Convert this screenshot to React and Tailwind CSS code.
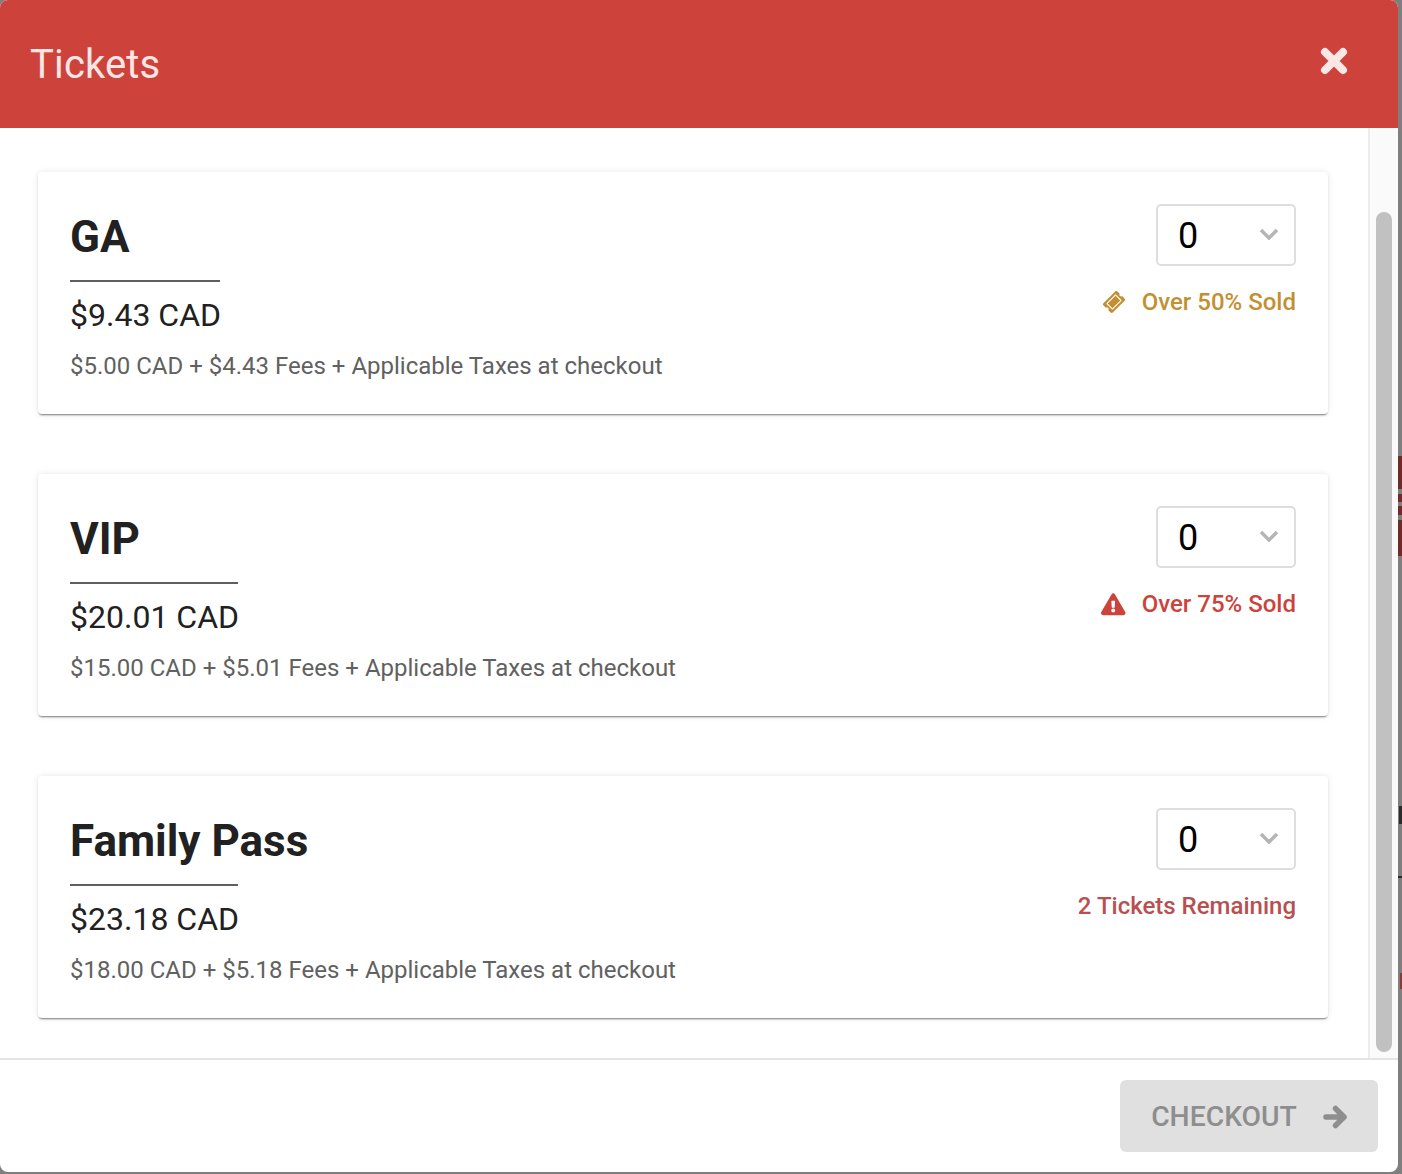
import React from "react";
import { FaTicketAlt, FaExclamationTriangle } from "react-icons/fa";

function Chevron() {
  return (
    <svg viewBox="0 0 20 12" className="w-[20px] h-[12px] mb-[2px]" fill="none" stroke="#b5b5b5" strokeWidth="3.5">
      <path d="M2 2l8 8 8-8" />
    </svg>
  );
}

function Card({ name, ruleW, price, detail, status, statusClass, icon }) {
  return (
    <div className="h-[242px] bg-white rounded-[4px] flex justify-between pl-[32px] pr-[32px] shadow-[0_2px_2px_-1px_rgba(0,0,0,0.5),0_0_6px_rgba(0,0,0,0.1)]">
      <div className="flex flex-col items-start">
        <div className="pt-[38px] h-[110px] border-b-2 border-[#5f5f5f] box-border" style={{ width: ruleW }}>
          <div className="text-[44px] leading-[54px] font-bold text-[#212121] whitespace-nowrap">{name}</div>
        </div>
        <div className="mt-[13px] text-[32px] leading-[40px] text-[#212121] whitespace-nowrap">{price}</div>
        <div className="mt-[15px] text-[24px] leading-[32px] text-[#616161] whitespace-nowrap">{detail}</div>
      </div>
      <div className="flex flex-col items-end pt-[32px]">
        <div className="w-[140px] h-[62px] border-2 border-[#dedede] rounded-[5px] flex items-center justify-between pl-[20px] pr-[15px] bg-white">
          <span className="text-[36px] leading-[40px] text-black pt-[2px]">0</span>
          <Chevron />
        </div>
        <div className={`mt-[20px] h-[32px] flex items-center text-[24px] font-medium ${statusClass}`}>
          {icon && <span className="mr-[15px] w-[26px] flex items-center justify-center">{icon}</span>}
          <span>{status}</span>
        </div>
      </div>
    </div>
  );
}

export default function App() {
  return (
    <div className="relative w-[1402px] h-[1174px] overflow-hidden bg-[#7f7f7f] font-['Roboto',sans-serif]">
      <div className="absolute right-0 top-[456px] w-[4px] h-[100px] bg-[#6e2b28]" />
      <div className="absolute right-0 top-[489px] w-[4px] h-[5px] bg-[#7f7f7f]" />
      <div className="absolute right-0 top-[502px] w-[4px] h-[4px] bg-[#7f7f7f]" />
      <div className="absolute right-0 top-[515px] w-[4px] h-[5px] bg-[#7f7f7f]" />
      <div className="absolute right-0 top-[806px] w-[3px] h-[18px] bg-[#2b2b2b]" />
      <div className="absolute right-0 top-[876px] w-[4px] h-[2px] bg-[#2b2b2b]" />
      <div className="absolute right-0 top-[973px] w-[2px] h-[16px] bg-[#8b3a38]" />

      <div className="relative w-[1398px] h-[1172px] bg-white rounded-[8px] overflow-hidden flex flex-col">
        <div className="h-[128px] shrink-0 bg-[#cd433c] flex items-center justify-between pl-[30px] pr-[50px]">
          <div className="text-[40px] leading-[48px] tracking-[0.15px] text-[#f9e6e5] pt-[2px]">Tickets</div>
          <svg viewBox="0 0 28 28" className="w-[28px] h-[28px] mb-[6px]" fill="none" stroke="#f9e6e5" strokeWidth="8" strokeLinecap="round" strokeLinejoin="round">
            <path d="M5 5l18 18M23 5L5 23" />
          </svg>
        </div>
        <div className="flex-1 flex min-h-0">
          <div className="flex-1 flex flex-col gap-[60px] pt-[44px] pl-[38px] pr-[40px]">
            <Card
              name="GA"
              ruleW={150}
              price="$9.43 CAD"
              detail="$5.00 CAD + $4.43 Fees + Applicable Taxes at checkout"
              status="Over 50% Sold"
              statusClass="text-[#c48f33]"
              icon={<FaTicketAlt size={20} color="#c48f33" className="-rotate-45" />}
            />
            <Card
              name="VIP"
              ruleW={168}
              price="$20.01 CAD"
              detail="$15.00 CAD + $5.01 Fees + Applicable Taxes at checkout"
              status="Over 75% Sold"
              statusClass="text-[#cd433c]"
              icon={<FaExclamationTriangle size={24.5} color="#cd433c" />}
            />
            <Card
              name="Family Pass"
              ruleW={168}
              price="$23.18 CAD"
              detail="$18.00 CAD + $5.18 Fees + Applicable Taxes at checkout"
              status="2 Tickets Remaining"
              statusClass="text-[#b94f4f]"
            />
          </div>
          <div className="w-[30px] shrink-0 bg-[#fafafa] border-l-2 border-[#ececec] pl-[6px] pt-[84px]">
            <div className="w-[16px] h-[840px] rounded-full bg-[#c1c1c1]" />
          </div>
        </div>
        <div className="h-[114px] shrink-0 border-t-2 border-[#e4e4e4] flex items-center justify-end pr-[20px]">
          <div className="w-[258px] h-[72px] rounded-[6px] bg-[#e0e0e0] flex items-center justify-center gap-[26px] text-[#8e8e8e]">
            <span className="text-[28.3px] font-medium pt-[2px]">CHECKOUT</span>
            <svg viewBox="0 0 24 24" className="w-[24px] h-[24px] mt-[2px]" fill="none" stroke="#8e8e8e" strokeWidth="5.5" strokeLinecap="round" strokeLinejoin="round">
              <path d="M3 12h18M12.500 3.500l8.500 8.500-8.500 8.500" />
            </svg>
          </div>
        </div>
      </div>
    </div>
  );
}
